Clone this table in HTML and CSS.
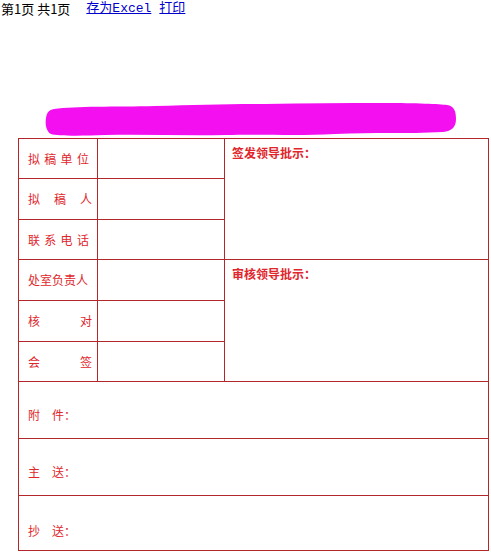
FILE: index.html
```html
<!DOCTYPE html>
<html lang="zh">
<head>
<meta charset="utf-8">
<title>稿纸</title>
<link rel="stylesheet" href="styles.css">
</head>
<body>
<div class="toolbar">
  <span class="pages">第1页 共1页</span>
  <a href="#" class="link">存为Excel</a>
  <a href="#" class="link">打印</a>
</div>
<div class="title">
  <svg class="blob" width="412" height="38" viewBox="0 0 412 38">
    <path d="M9 8 C30 5 70 6 110 5 C150 4 180 3 220 3 C260 2 300 2 340 2 C370 2 395 3 402 4 C409 5 411 10 411 18 C411 26 407 30 398 31 C360 33 330 31 290 33 C250 35 220 33 180 34 C140 35 100 33 60 34 C35 35 12 35 6 33 C1 30 0 23 1 17 C2 11 4 9 9 8 Z" fill="#f40ff0"/>
  </svg>
</div>
<table class="form">
  <colgroup>
    <col class="c1"><col class="c2"><col class="c3">
  </colgroup>
  <tr class="r40">
    <td class="label spaced">拟稿单位</td>
    <td></td>
    <td class="note" rowspan="3">签发领导批示：</td>
  </tr>
  <tr class="r41">
    <td class="label"><span class="jl"><span>拟</span><span>稿</span><span>人</span></span></td>
    <td></td>
  </tr>
  <tr class="r40">
    <td class="label spaced">联系电话</td>
    <td></td>
  </tr>
  <tr class="r41">
    <td class="label">处室负责人</td>
    <td></td>
    <td class="note" rowspan="3">审核领导批示：</td>
  </tr>
  <tr class="r41">
    <td class="label"><span class="jw"><span>核</span><span>对</span></span></td>
    <td></td>
  </tr>
  <tr class="r40">
    <td class="label"><span class="jw"><span>会</span><span>签</span></span></td>
    <td></td>
  </tr>
  <tr class="r57">
    <td class="wide" colspan="3">附　件：</td>
  </tr>
  <tr class="r57">
    <td class="wide" colspan="3">主　送：</td>
  </tr>
  <tr class="r56">
    <td class="wide" colspan="3">抄　送：</td>
  </tr>
</table>
</body>
</html>
```
FILE: styles.css
```css
html, body {
  margin: 0;
  padding: 0;
  background: #ffffff;
}
body {
  font-family: "Noto Sans CJK SC", "DejaVu Sans", sans-serif;
  font-size: 13px;
  color: #000;
}
.toolbar {
  height: 18px;
  line-height: 18px;
  padding-left: 1px;
  display: flex;
  align-items: center;
  font-size: 13px;
}
.pages {
  margin-right: 16px;
}
.link {
  color: #0000cc;
  text-decoration: underline;
  margin-right: 8px;
  font-family: "Liberation Mono", "Noto Sans CJK SC", monospace;
  font-size: 13px;
}
.title {
  padding-top: 83px;
  padding-left: 45px;
  height: 37px;
}
.blob {
  display: block;
}
.form {
  margin-left: 18px;
  width: 470px;
  border-collapse: collapse;
  table-layout: fixed;
}
.c1 { width: 79px; }
.c2 { width: 127px; }
.c3 { width: 264px; }
.form td {
  border: 1px solid #b3262a;
  padding: 0;
  color: #e0262c;
  font-size: 12px;
  line-height: 16px;
}
.r40 td { height: 39px; }
.r41 td { height: 40px; }
.r57 td { height: 41px; }
.r56 td { height: 43px; }
.label {
  padding-left: 9px !important;
  padding-right: 0 !important;
  vertical-align: middle;
  white-space: nowrap;
}
.spaced {
  letter-spacing: 4.3px;
}
.jl, .jw {
  display: flex;
  justify-content: space-between;
  padding-right: 5px;
}
.note {
  vertical-align: top;
  padding: 6px 0 0 7px !important;
  font-weight: bold;
  font-size: 12px;
}
.wide {
  vertical-align: bottom;
  padding: 0 0 15px 9px !important;
}
.r56 .wide {
  padding-bottom: 11px !important;
}
```
